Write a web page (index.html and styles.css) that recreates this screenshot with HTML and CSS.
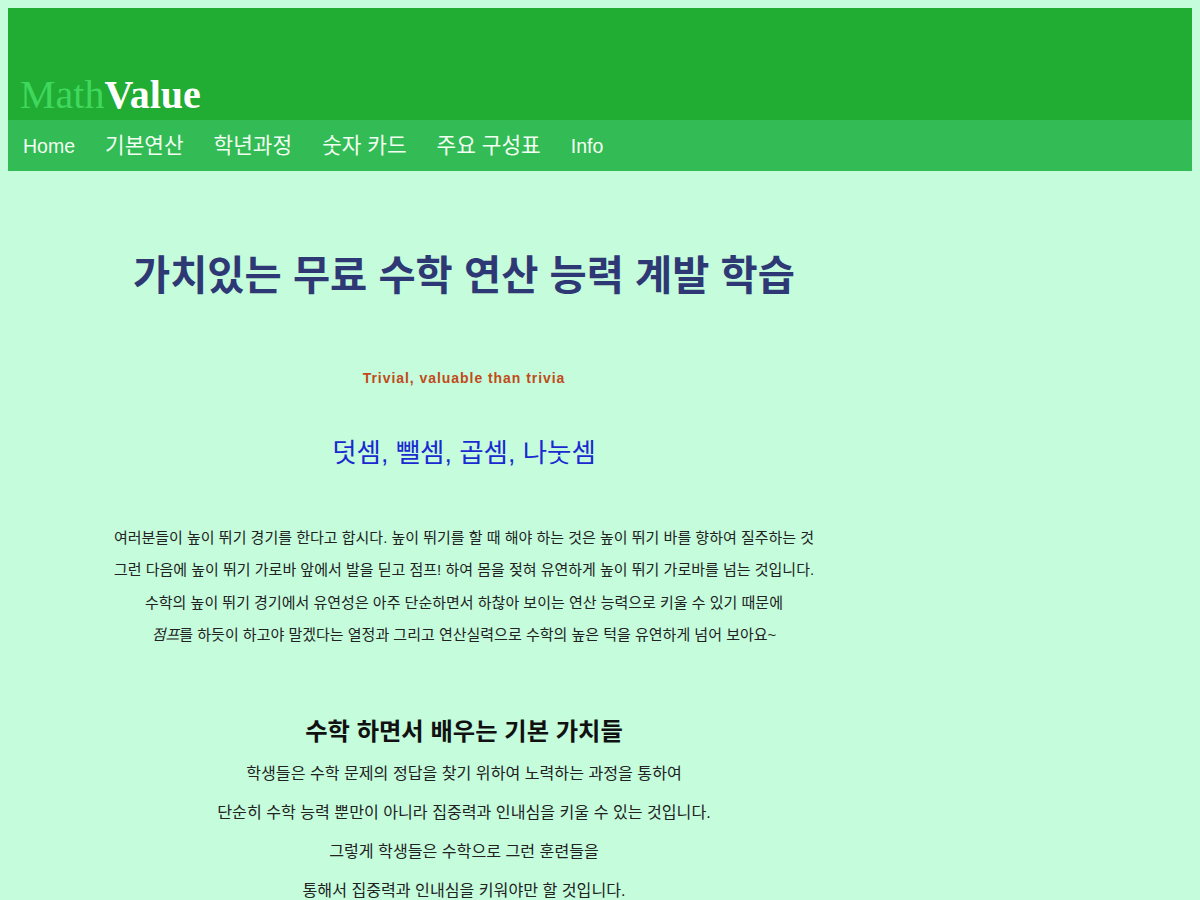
FILE: index.html
```html
<!DOCTYPE html>
<html lang="ko">
<head>
<meta charset="utf-8">
<title>MathValue</title>
<link rel="stylesheet" href="styles.css">
</head>
<body>
<header class="masthead">
  <div class="logo"><span class="logo-math">Math</span><span class="logo-value">Value</span></div>
</header>
<nav class="menu">
  <a href="#">Home</a>
  <a href="#" class="ko">기본연산</a>
  <a href="#" class="ko">학년과정</a>
  <a href="#" class="ko">숫자 카드</a>
  <a href="#" class="ko">주요 구성표</a>
  <a href="#">Info</a>
</nav>
<main class="content">
  <h1 class="title">가치있는 무료 수학 연산 능력 계발 학습</h1>
  <p class="tagline">Trivial, valuable than trivia</p>
  <h2 class="ops">덧셈, 뺄셈, 곱셈, 나눗셈</h2>
  <div class="intro">
    <p>여러분들이 높이 뛰기 경기를 한다고 합시다. 높이 뛰기를 할 때 해야 하는 것은 높이 뛰기 바를 향하여 질주하는 것</p>
    <p>그런 다음에 높이 뛰기 가로바 앞에서 발을 딛고 점프! 하여 몸을 젖혀 유연하게 높이 뛰기 가로바를 넘는 것입니다.</p>
    <p>수학의 높이 뛰기 경기에서 유연성은 아주 단순하면서 하찮아 보이는 연산 능력으로 키울 수 있기 때문에</p>
    <p><em>점프</em>를 하듯이 하고야 말겠다는 열정과 그리고 연산실력으로 수학의 높은 턱을 유연하게 넘어 보아요~</p>
  </div>
  <h3 class="values-title">수학 하면서 배우는 기본 가치들</h3>
  <div class="values">
    <p>학생들은 수학 문제의 정답을 찾기 위하여 노력하는 과정을 통하여</p>
    <p>단순히 수학 능력 뿐만이 아니라 집중력과 인내심을 키울 수 있는 것입니다.</p>
    <p>그렇게 학생들은 수학으로 그런 훈련들을</p>
    <p>통해서 집중력과 인내심을 키워야만 할 것입니다.</p>
  </div>
</main>
</body>
</html>
```

FILE: styles.css
```css
html, body {
  background: #c4fcdc;
}
body {
  margin: 8px;
  font-family: "Liberation Sans", "Noto Sans CJK KR", sans-serif;
  color: #222;
}
.masthead {
  background: #21ac33;
  height: 112px;
  display: flex;
  align-items: flex-end;
  padding: 0 12px;
}
.logo {
  font-family: "Liberation Serif", serif;
  font-size: 40px;
  line-height: 50px;
}
.logo-math {
  color: #3fd85e;
}
.logo-value {
  color: #ffffff;
  font-weight: bold;
}
.menu {
  background: #33bb55;
  height: 51px;
  display: flex;
  align-items: center;
}
.menu a {
  color: #f2fff2;
  text-decoration: none;
  font-size: 19.5px;
  line-height: 24px;
  padding: 0 15px;
}
.menu a.ko {
  font-size: 21.35px;
}
.content {
  width: 912px;
  text-align: center;
}
.title {
  margin: 80px 0 0;
  font-size: 40.4px;
  line-height: 50px;
  font-weight: bold;
  color: #2e3874;
}
.tagline {
  margin: 67px 0 0;
  font-size: 14px;
  line-height: 20px;
  font-weight: bold;
  color: #c24a1a;
  letter-spacing: 0.95px;
}
.ops {
  margin: 48px 0 0;
  font-size: 26.5px;
  line-height: 34px;
  font-weight: normal;
  color: #1a2ad0;
}
.intro {
  margin-top: 52px;
}
.intro p {
  margin: 0;
  font-size: 15px;
  line-height: 32.3px;
  color: #222;
}
.values-title {
  margin: 66px 0 0;
  font-size: 24.3px;
  line-height: 30px;
  font-weight: bold;
  color: #111;
}
.values {
  margin-top: 7px;
}
.values p {
  margin: 0;
  font-size: 16.1px;
  line-height: 39px;
  color: #222;
}
```
